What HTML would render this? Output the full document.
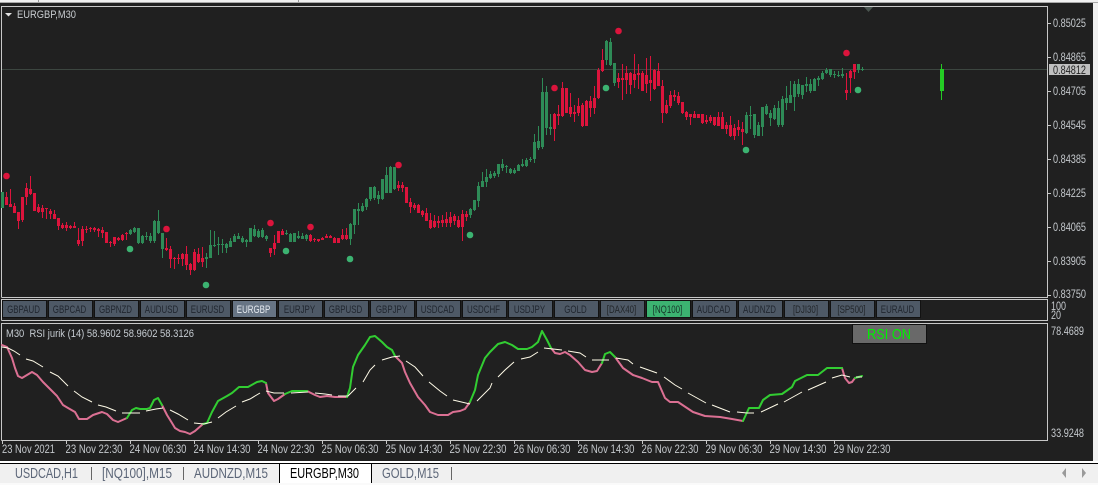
<!DOCTYPE html>
<html><head><meta charset="utf-8"><title>EURGBP,M30</title>
<style>
html,body{margin:0;padding:0;background:#f0f0f0;width:1098px;height:485px;overflow:hidden}
svg{display:block}
text{font-family:"Liberation Sans",sans-serif}
.a{font-size:11.5px;fill:#c4c8cc}
.b{font-size:11px;fill:#20262f;text-anchor:middle}
.t{font-size:14.5px;fill:#5c6678}
</style></head><body>
<svg width="1098" height="485" viewBox="0 0 1098 485" xmlns="http://www.w3.org/2000/svg">
<rect x="0" y="0" width="1098" height="485" fill="#f0f0f0"/>
<rect x="0" y="2" width="1098" height="1" fill="#a8a8a8"/>
<rect x="0" y="3" width="1093" height="458" fill="#202020"/>
<rect x="0" y="461" width="1098" height="2" fill="#fff"/>
<rect x="0" y="463" width="1098" height="1" fill="#000"/>
<rect x="0" y="483" width="1098" height="2" fill="#fafafa"/>
<rect x="38" y="0" width="1" height="2" fill="#999"/><rect x="298" y="0" width="1" height="2" fill="#999"/>

<g fill="none" stroke="#c8c8c8" shape-rendering="crispEdges">
<path d="M1.5 297.5V6.5H1047.5V297.5H1.5"/>
<path d="M1.5 320.5V299.5H1047.5V320.5H1.5"/>
<path d="M1.5 440.5V323.5H1047.5V440.5H1.5"/>
<path d="M1048 23.5h3M1048 57.5h3M1048 91.5h3M1048 125.5h3M1048 159.5h3M1048 193.5h3M1048 227.5h3M1048 261.5h3M1048 295.5h3"/>
<path d="M2.5 441v3M66.5 441v3M130.5 441v3M194.5 441v3M258.5 441v3M322.5 441v3M386.5 441v3M450.5 441v3M514.5 441v3M578.5 441v3M642.5 441v3M706.5 441v3M770.5 441v3M834.5 441v3"/>
</g>
<rect x="2" y="69" width="1045" height="1" fill="#3c4640"/>
<path d="M864 7h9l-4.5 5z" fill="#4a5550"/>
<path d="M5 13h7l-3.5 3.5z" fill="#e0e0e0"/>
<text x="17" y="18" font-size="11" fill="#c8ccd0" textLength="59" lengthAdjust="spacingAndGlyphs">EURGBP,M30</text>

<!-- red wicks -->
<path shape-rendering="crispEdges" fill="none" stroke="#dc143c" stroke-width="1" d="M6.5 192V205M10.5 189V207M14.5 203V213M18.5 212V229M22.5 197V222M26.5 183V205M30.5 176V195M34.5 193V211M38.5 204V213M42.5 205V218M46.5 208V219M50.5 209V219M54.5 210V219M58.5 218V230M62.5 223V229M66.5 222V231M70.5 225V229M74.5 222V228M78.5 228V246M82.5 226V246M86.5 226V233M90.5 227V232M94.5 227V232M98.5 228V237M102.5 227V238M106.5 232V243M110.5 241V247M114.5 237V246M118.5 237V241M122.5 234V241M126.5 232V240M166.5 238V251M170.5 246V268M174.5 257V269M178.5 254V264M182.5 253V266M186.5 246V270M190.5 263V275M194.5 249V271M198.5 248V263M202.5 247V267M270.5 248V257M274.5 235V255M278.5 231V243M282.5 229V235M310.5 234V242M314.5 238V242M318.5 239V242M322.5 237V240M326.5 234V238M330.5 235V238M334.5 237V243M338.5 238V243M342.5 229V240M346.5 228V240M398.5 181V191M402.5 182V192M406.5 187V203M410.5 198V213M414.5 203V210M418.5 204V213M422.5 210V217M426.5 208V221M430.5 213V229M434.5 215V228M438.5 216V228M442.5 215V227M446.5 212V227M450.5 212V227M454.5 214V225M458.5 216V228M462.5 210V241M466.5 211V221M554.5 113V141M558.5 105V125M562.5 82V117M566.5 88V113M570.5 93V117M574.5 105V122M578.5 98V116M582.5 103V127M586.5 100V126M590.5 96V117M594.5 86V114M598.5 68V99M602.5 49V72M618.5 73V88M622.5 64V100M626.5 66V94M630.5 72V94M634.5 54V88M638.5 64V89M642.5 71V91M646.5 58V93M650.5 56V101M654.5 69V90M658.5 63V86M662.5 80V123M666.5 100V114M670.5 91V108M674.5 90V101M678.5 92V105M682.5 102V114M686.5 111V120M690.5 114V125M694.5 111V118M698.5 114V118M702.5 114V124M706.5 115V124M710.5 115V123M714.5 117V126M718.5 112V126M722.5 112V129M726.5 122V134M730.5 116V137M734.5 124V140M738.5 120V136M742.5 122V145M846.5 73V100M850.5 70V93M854.5 64V79"/>
<!-- red bodies -->
<path shape-rendering="crispEdges" fill="none" stroke="#dc143c" stroke-width="3" d="M6.5 197V205M10.5 204V207M14.5 206V213M18.5 212V221M22.5 197V220M26.5 188V197M30.5 189V194M34.5 193V211M38.5 207V212M42.5 208V212M46.5 208V209M50.5 211V214M54.5 214V219M58.5 218V226M62.5 225V228M66.5 225V228M70.5 226V228M74.5 226V228M78.5 240V244M82.5 229V241M86.5 229V230M90.5 228V229M94.5 228V230M98.5 229V231M102.5 230V233M106.5 232V243M110.5 242V243M114.5 237V244M118.5 238V240M122.5 235V240M126.5 233V234M166.5 248V250M170.5 249V259M174.5 258V259M178.5 258V259M182.5 254V259M186.5 254V265M190.5 264V270M194.5 252V270M198.5 254V262M202.5 258V262M270.5 248V253M274.5 243V249M278.5 231V243M282.5 231V235M310.5 235V241M314.5 239V240M318.5 239V241M322.5 238V240M326.5 236V238M330.5 236V238M334.5 238V243M338.5 238V243M342.5 235V239M346.5 235V239M398.5 185V188M402.5 185V188M406.5 187V203M410.5 202V207M414.5 205V208M418.5 205V213M422.5 211V215M426.5 213V221M430.5 220V228M434.5 221V227M438.5 221V223M442.5 220V223M446.5 219V223M450.5 217V223M454.5 216V221M458.5 220V227M462.5 214V227M466.5 214V217M554.5 114V129M558.5 114V116M562.5 88V116M566.5 88V113M570.5 107V114M574.5 112V114M578.5 106V113M582.5 105V126M586.5 101V126M590.5 101V108M594.5 98V108M598.5 70V98M602.5 60V71M618.5 78V82M622.5 78V80M626.5 73V80M630.5 73V85M634.5 74V80M638.5 73V75M642.5 73V91M646.5 75V84M650.5 80V83M654.5 70V89M658.5 71V86M662.5 86V113M666.5 105V113M670.5 95V106M674.5 95V97M678.5 96V103M682.5 102V113M686.5 112V117M690.5 114V117M694.5 114V118M698.5 114V118M702.5 114V123M706.5 120V122M710.5 117V121M714.5 117V125M718.5 117V126M722.5 117V129M726.5 125V129M730.5 125V136M734.5 128V136M738.5 127V130M742.5 129V132M846.5 90V93M850.5 71V78M854.5 64V72"/>
<!-- green wicks -->
<path shape-rendering="crispEdges" fill="none" stroke="#2e8b57" stroke-width="1" d="M2.5 192V208M130.5 229V235M134.5 227V233M138.5 228V244M142.5 235V244M146.5 232V240M150.5 233V243M154.5 220V243M158.5 210V234M162.5 233V258M206.5 253V268M210.5 230V258M214.5 231V247M218.5 237V255M222.5 239V253M226.5 243V253M230.5 238V247M234.5 234V242M238.5 233V239M242.5 236V243M246.5 239V247M250.5 228V242M254.5 225V237M258.5 229V238M262.5 228V238M266.5 235V241M286.5 230V235M290.5 233V242M294.5 233V242M298.5 231V239M302.5 233V239M306.5 234V241M350.5 223V245M354.5 209V234M358.5 203V225M362.5 203V212M366.5 198V210M370.5 187V201M374.5 186V200M378.5 191V204M382.5 179V200M386.5 167V193M390.5 166V193M394.5 167V190M470.5 208V218M474.5 200V211M478.5 182V207M482.5 172V187M486.5 169V187M490.5 171V179M494.5 171V178M498.5 164V177M502.5 159V171M506.5 165V173M510.5 168V174M514.5 168V174M518.5 164V171M522.5 159V167M526.5 158V167M530.5 157V162M534.5 134V163M538.5 126V150M542.5 78V149M546.5 86V135M550.5 114V135M606.5 40V65M610.5 38V66M614.5 63V86M746.5 112V134M750.5 106V129M754.5 114V138M758.5 122V136M762.5 107V136M766.5 104V115M770.5 110V126M774.5 105V120M778.5 101V127M782.5 96V127M786.5 86V110M790.5 81V103M794.5 81V111M798.5 79V97M802.5 85V99M806.5 77V92M810.5 79V93M814.5 78V91M818.5 76V86M822.5 71V80M826.5 68V74M830.5 69V77M834.5 71V78M838.5 71V77M842.5 68V78M858.5 64V73M862.5 67V71"/>
<!-- green bodies -->
<path shape-rendering="crispEdges" fill="none" stroke="#2e8b57" stroke-width="3" d="M2.5 192V208M130.5 230V234M134.5 228V232M138.5 228V243M142.5 236V243M146.5 236V237M150.5 236V241M154.5 221V241M158.5 221V233M162.5 233V249M206.5 257V259M210.5 245V258M214.5 245V246M218.5 244V245M222.5 244V245M226.5 244V248M230.5 241V247M234.5 236V242M238.5 236V239M242.5 238V242M246.5 240V242M250.5 228V242M254.5 229V236M258.5 231V237M262.5 230V237M266.5 236V239M286.5 233V234M290.5 234V242M294.5 233V242M298.5 236V238M302.5 236V239M306.5 235V239M350.5 224V239M354.5 209V225M358.5 209V211M362.5 206V211M366.5 199V207M370.5 187V199M374.5 187V198M378.5 195V199M382.5 179V199M386.5 175V193M390.5 167V193M394.5 167V189M470.5 209V215M474.5 200V210M478.5 186V201M482.5 181V187M486.5 177V182M490.5 174V178M494.5 173V176M498.5 164V174M502.5 164V168M506.5 166V167M510.5 169V173M514.5 170V173M518.5 165V171M522.5 164V166M526.5 160V166M530.5 159V160M534.5 142V159M538.5 141V148M542.5 92V147M546.5 92V128M550.5 127V129M606.5 41V60M610.5 42V65M614.5 63V83M746.5 115V133M750.5 115V116M754.5 114V135M758.5 125V136M762.5 107V127M766.5 106V114M770.5 113V118M774.5 108V119M778.5 108V125M782.5 99V125M786.5 98V103M790.5 95V103M794.5 84V97M798.5 84V94M802.5 85V95M806.5 84V86M810.5 84V91M814.5 79V91M818.5 78V80M822.5 73V79M826.5 70V73M830.5 69V75M834.5 74V75M838.5 75V76M842.5 74V76M858.5 64V70M862.5 69V70"/>
<!-- current candle -->
<rect x="941" y="64" width="1" height="36" fill="#24cc24"/>
<rect x="940" y="69" width="4" height="22" fill="#24cc24"/>

<g fill="#dc143c">
<circle cx="6.5" cy="176" r="3.3"/><circle cx="166.5" cy="229" r="3.3"/><circle cx="270.5" cy="223" r="3.3"/><circle cx="310.5" cy="227" r="3.3"/><circle cx="398.5" cy="165" r="3.3"/><circle cx="554.5" cy="88" r="3.3"/><circle cx="618.5" cy="31" r="3.3"/><circle cx="846.5" cy="53" r="3.3"/>
</g>
<g fill="#3cb371">
<circle cx="130" cy="249" r="3.3"/><circle cx="286" cy="251" r="3.3"/><circle cx="350" cy="259" r="3.3"/><circle cx="206" cy="285" r="3.3"/><circle cx="470" cy="235" r="3.3"/><circle cx="606" cy="88" r="3.3"/><circle cx="746" cy="150" r="3.3"/><circle cx="858" cy="90" r="3.3"/>
</g>

<!-- price axis -->
<g class="a">
<text class="a" x="1053" y="27" textLength="33" lengthAdjust="spacingAndGlyphs">0.85025</text>
<text class="a" x="1053" y="61" textLength="33" lengthAdjust="spacingAndGlyphs">0.84865</text>
<text class="a" x="1053" y="95" textLength="33" lengthAdjust="spacingAndGlyphs">0.84705</text>
<text class="a" x="1053" y="129" textLength="33" lengthAdjust="spacingAndGlyphs">0.84545</text>
<text class="a" x="1053" y="163" textLength="33" lengthAdjust="spacingAndGlyphs">0.84385</text>
<text class="a" x="1053" y="197" textLength="33" lengthAdjust="spacingAndGlyphs">0.84225</text>
<text class="a" x="1053" y="231" textLength="33" lengthAdjust="spacingAndGlyphs">0.84065</text>
<text class="a" x="1053" y="265" textLength="33" lengthAdjust="spacingAndGlyphs">0.83905</text>
<text class="a" x="1053" y="298" textLength="33" lengthAdjust="spacingAndGlyphs">0.83750</text>
</g>
<rect x="1049" y="64" width="41" height="11" fill="#c0c0c0"/>
<text x="1053" y="74" font-size="11.5" fill="#222" textLength="33" lengthAdjust="spacingAndGlyphs">0.84812</text>
<text class="a" x="1051" y="310" textLength="15" lengthAdjust="spacingAndGlyphs">100</text>
<text class="a" x="1051" y="319" textLength="10" lengthAdjust="spacingAndGlyphs">20</text>
<text class="a" x="1051" y="335" textLength="33" lengthAdjust="spacingAndGlyphs">78.4689</text>
<text class="a" x="1051" y="437" textLength="33" lengthAdjust="spacingAndGlyphs">33.9248</text>

<!-- buttons -->
<g shape-rendering="crispEdges">
<g fill="#121212">
<rect x="2" y="300" width="45" height="18"/><rect x="48" y="300" width="45" height="18"/><rect x="94" y="300" width="45" height="18"/><rect x="140" y="300" width="45" height="18"/><rect x="186" y="300" width="45" height="18"/><rect x="232" y="300" width="45" height="18"/><rect x="278" y="300" width="45" height="18"/><rect x="324" y="300" width="45" height="18"/><rect x="370" y="300" width="45" height="18"/><rect x="416" y="300" width="45" height="18"/><rect x="462" y="300" width="45" height="18"/><rect x="508" y="300" width="45" height="18"/><rect x="554" y="300" width="45" height="18"/><rect x="600" y="300" width="45" height="18"/><rect x="646" y="300" width="45" height="18"/><rect x="692" y="300" width="45" height="18"/><rect x="738" y="300" width="45" height="18"/><rect x="784" y="300" width="45" height="18"/><rect x="830" y="300" width="45" height="18"/><rect x="876" y="300" width="45" height="18"/>
</g>
<g fill="#4e5966">
<rect x="3" y="301" width="43" height="16"/><rect x="49" y="301" width="43" height="16"/><rect x="95" y="301" width="43" height="16"/><rect x="141" y="301" width="43" height="16"/><rect x="187" y="301" width="43" height="16"/><rect x="279" y="301" width="43" height="16"/><rect x="325" y="301" width="43" height="16"/><rect x="371" y="301" width="43" height="16"/><rect x="417" y="301" width="43" height="16"/><rect x="463" y="301" width="43" height="16"/><rect x="509" y="301" width="43" height="16"/><rect x="555" y="301" width="43" height="16"/><rect x="601" y="301" width="43" height="16"/><rect x="693" y="301" width="43" height="16"/><rect x="739" y="301" width="43" height="16"/><rect x="785" y="301" width="43" height="16"/><rect x="831" y="301" width="43" height="16"/><rect x="877" y="301" width="43" height="16"/>
</g>
<rect x="233" y="301" width="43" height="16" fill="#677484"/>
<rect x="647" y="301" width="43" height="16" fill="#3cb371"/>
</g>
<g class="b">
<text class="b" transform="translate(23.5 313) scale(.72 1)">GBPAUD</text>
<text class="b" transform="translate(69.5 313) scale(.72 1)">GBPCAD</text>
<text class="b" transform="translate(115.5 313) scale(.72 1)">GBPNZD</text>
<text class="b" transform="translate(161.5 313) scale(.72 1)">AUDUSD</text>
<text class="b" transform="translate(207.5 313) scale(.72 1)">EURUSD</text>
<text class="b" transform="translate(253.5 313) scale(.72 1)" style="fill:#e4e9ef">EURGBP</text>
<text class="b" transform="translate(299.5 313) scale(.72 1)">EURJPY</text>
<text class="b" transform="translate(345.5 313) scale(.72 1)">GBPUSD</text>
<text class="b" transform="translate(391.5 313) scale(.72 1)">GBPJPY</text>
<text class="b" transform="translate(437.5 313) scale(.72 1)">USDCAD</text>
<text class="b" transform="translate(483.5 313) scale(.72 1)">USDCHF</text>
<text class="b" transform="translate(529.5 313) scale(.72 1)">USDJPY</text>
<text class="b" transform="translate(575.5 313) scale(.72 1)">GOLD</text>
<text class="b" transform="translate(621.5 313) scale(.72 1)" style="fill:#22262a">[DAX40]</text>
<text class="b" transform="translate(667.5 313) scale(.72 1)" style="fill:#17342a">[NQ100]</text>
<text class="b" transform="translate(713.5 313) scale(.72 1)">AUDCAD</text>
<text class="b" transform="translate(759.5 313) scale(.72 1)">AUDNZD</text>
<text class="b" transform="translate(805.5 313) scale(.72 1)" style="fill:#22262a">[DJI30]</text>
<text class="b" transform="translate(851.5 313) scale(.72 1)" style="fill:#22262a">[SP500]</text>
<text class="b" transform="translate(897.5 313) scale(.72 1)">EURAUD</text>
</g>

<!-- RSI -->
<text x="6" y="337" font-size="11" fill="#c6ccd2" textLength="188" lengthAdjust="spacingAndGlyphs" xml:space="preserve">M30  RSI jurik (14) 58.9602 58.9602 58.3126</text>
<rect x="852" y="324" width="75" height="20" fill="#111"/>
<rect x="853" y="325" width="73" height="18" fill="#696969"/>
<text x="867" y="339" font-size="15" fill="#00f000" textLength="44" lengthAdjust="spacingAndGlyphs">RSI ON</text>

<g fill="none" stroke-width="2" stroke-linejoin="round" stroke-linecap="round">
<g stroke="#db7093">
<polyline points="2,345 7,347 12,358 15,368 18,376 22,378 27,375 32,372 37,375 43,382 50,389 57,396 63,405 68,408 75,412 79,419 87,419 93,415 102,412 107,414 113,420 118,422 127,418"/>
<polyline points="162,405 167,415 172,423 175,428 180,431 185,432 190,434 195,431 203,424"/>
<polyline points="266,383 268,393 274,401 278,399 285,394"/>
<polyline points="307,391 315,395 320,397 327,396 335,397 347,397"/>
<polyline points="395,356 402,363 405,372 410,383 418,397 425,405 430,412 438,415 448,415 453,412 460,411 465,409 470,402"/>
<polyline points="551,348 555,353 560,354 565,352 570,355 578,362 585,370 592,372 597,371 602,363"/>
<polyline points="615,357 623,368 633,375 642,378 652,382 658,382 665,398 670,402 678,402 693,412 705,416 720,417 732,419 743,421"/>
<polyline points="842,368 845,378 849,383 852,382 855,378"/>
</g>
<g stroke="#32cd32">
<polyline points="127,418 132,410 136,408 140,409 147,409 150,408 154,400 158,398 162,405"/>
<polyline points="203,424 207,423 212,412 218,401 227,396 232,393 239,387 248,387 257,382 262,381 266,383"/>
<polyline points="285,394 292,391 307,391"/>
<polyline points="347,397 350,388 353,367 358,355 365,345 370,337 375,336 382,342 387,347 392,350 395,356"/>
<polyline points="470,402 475,390 478,375 485,358 490,352 498,344 505,342 512,345 518,349 527,349 532,347 538,342 542,331 547,340 551,348"/>
<polyline points="602,363 605,354 610,352 615,357"/>
<polyline points="743,421 749,408 759,408 763,400 770,395 782,394 792,387 795,381 807,375 818,375 827,368 842,368"/>
<polyline points="855,378 862,376"/>
</g>
</g>
<path fill="none" stroke="#fffbe8" stroke-width="1" d="M2 347L8 348L14 351L20 355M26 359L33 361L43 367M50 372L58 376L68 386M74 391L82 397L92 402M98 405L106 407L116 411M122 413L140 413M146 411L156 409L163 408M170 410L178 414L188 420M194 423L204 424L212 422M218 418L226 412L236 406M242 402L250 399L260 393M266 391L274 393L284 393M291 393L308 392M315 393L325 394L332 395M338 396L348 396L356 388M363 382L370 370L375 365M382 360L392 357L400 356M406 361L415 367L423 376M429 382L440 391L447 396M453 400L470 404M477 401L490 388L492 383M498 377L505 370L514 362M521 359L530 357L538 352M544 348L562 350M568 351L580 353L586 357M592 360L609 360M616 358L628 360L633 364M640 367L657 373M664 377L675 385L682 389M688 393L706 403M712 405L730 412M737 412L747 413L754 413M761 412L778 404M784 402L802 392M808 390L826 382M832 378L842 375L850 377M856 377L862 377"/>

<!-- time axis -->
<g>
<text class="a" x="2" y="453" textLength="53" lengthAdjust="spacingAndGlyphs">23 Nov 2021</text>
<text class="a" x="65.5" y="453" textLength="57" lengthAdjust="spacingAndGlyphs">23 Nov 22:30</text>
<text class="a" x="129.5" y="453" textLength="57" lengthAdjust="spacingAndGlyphs">24 Nov 06:30</text>
<text class="a" x="193.5" y="453" textLength="57" lengthAdjust="spacingAndGlyphs">24 Nov 14:30</text>
<text class="a" x="257.5" y="453" textLength="57" lengthAdjust="spacingAndGlyphs">24 Nov 22:30</text>
<text class="a" x="321.5" y="453" textLength="57" lengthAdjust="spacingAndGlyphs">25 Nov 06:30</text>
<text class="a" x="385.5" y="453" textLength="57" lengthAdjust="spacingAndGlyphs">25 Nov 14:30</text>
<text class="a" x="449.5" y="453" textLength="57" lengthAdjust="spacingAndGlyphs">25 Nov 22:30</text>
<text class="a" x="513.5" y="453" textLength="57" lengthAdjust="spacingAndGlyphs">26 Nov 06:30</text>
<text class="a" x="577.5" y="453" textLength="57" lengthAdjust="spacingAndGlyphs">26 Nov 14:30</text>
<text class="a" x="641.5" y="453" textLength="57" lengthAdjust="spacingAndGlyphs">26 Nov 22:30</text>
<text class="a" x="705.5" y="453" textLength="57" lengthAdjust="spacingAndGlyphs">29 Nov 06:30</text>
<text class="a" x="769.5" y="453" textLength="57" lengthAdjust="spacingAndGlyphs">29 Nov 14:30</text>
<text class="a" x="833.5" y="453" textLength="57" lengthAdjust="spacingAndGlyphs">29 Nov 22:30</text>
</g>

<!-- tabs -->
<rect x="279" y="463" width="93" height="20" fill="#000"/>
<rect x="280" y="464" width="91" height="19" fill="#fff"/>
<text class="t" x="15" y="478" textLength="63" lengthAdjust="spacingAndGlyphs">USDCAD,H1</text>
<text class="t" x="102" y="478" textLength="70" lengthAdjust="spacingAndGlyphs">[NQ100],M15</text>
<text class="t" x="194" y="478" textLength="74" lengthAdjust="spacingAndGlyphs">AUDNZD,M15</text>
<text x="290" y="478" font-size="14.5" fill="#000" textLength="69" lengthAdjust="spacingAndGlyphs">EURGBP,M30</text>
<text class="t" x="382" y="478" textLength="57" lengthAdjust="spacingAndGlyphs">GOLD,M15</text>
<g fill="#666" shape-rendering="crispEdges">
<rect x="91" y="467" width="1" height="13"/><rect x="183" y="467" width="1" height="13"/><rect x="451" y="467" width="1" height="13"/>
</g>
<path d="M1066 468v10l-4-5zM1082 468v10l4-5z" fill="#9a9a9a"/>
</svg>
</body></html>
